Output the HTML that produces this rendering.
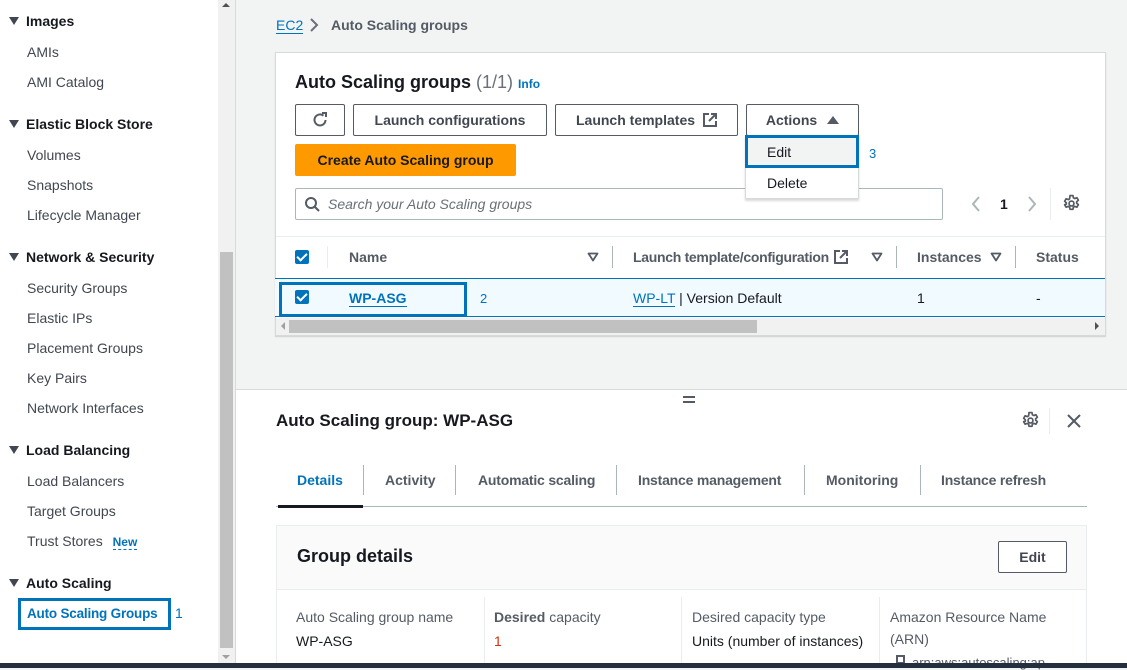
<!DOCTYPE html>
<html><head><meta charset="utf-8"><style>
*{margin:0;padding:0;box-sizing:border-box}
body{width:1127px;height:668px;overflow:hidden;position:relative;background:#f2f3f3;font-family:"Liberation Sans",sans-serif;font-size:14px;color:#16191f}
.a{position:absolute;white-space:nowrap}
.sb{left:0;top:0;width:218px;height:668px;background:#fff}
.h{font-weight:bold;color:#16191f;left:9px}
.h:before{content:"";display:inline-block;width:0;height:0;border-left:5px solid transparent;border-right:5px solid transparent;border-top:8px solid #414750;margin-right:7px;vertical-align:1px}
.l{left:27px;color:#414750}
.btn{position:absolute;border:1px solid #545b64;border-radius:2px;background:#fff;font-weight:bold;color:#414750;display:flex;align-items:center;justify-content:center;height:32px;top:104px}
.blue{color:#0073bb}
.cb{position:absolute;width:14px;height:14px;background:#0073bb;border-radius:2px}
.cb:after{content:"";position:absolute;left:4px;top:1px;width:4px;height:8px;border:solid #fff;border-width:0 2px 2px 0;transform:rotate(45deg)}
.th{top:249px;font-weight:bold;color:#545b64}
.sep{position:absolute;width:1px;background:#aab7b8}
.tab{top:472px;font-weight:bold;color:#545b64}
.sort{position:absolute}
</style></head><body>
<svg width="0" height="0" style="position:absolute"><defs>
<symbol id="gear" viewBox="0 0 18 18"><path d="M7.6 1.5h2.8l.4 2.1 1.3.7 2-.8 1.4 2.4-1.6 1.4v1.4l1.6 1.4-1.4 2.4-2-.8-1.3.7-.4 2.1H7.6l-.4-2.1-1.3-.7-2 .8-1.4-2.4L4.1 9.7V8.3L2.5 6.9l1.4-2.4 2 .8 1.3-.7z" stroke="#545b64" stroke-width="1.6" fill="none" stroke-linejoin="round"/><circle cx="9" cy="9" r="2.3" stroke="#545b64" stroke-width="1.6" fill="none"/></symbol>
<symbol id="tri" viewBox="0 0 12 10"><path d="M1.5 1.5h9L6 8.5z" stroke="#545b64" stroke-width="1.8" fill="none" stroke-linejoin="round"/></symbol>
</defs></svg>
<div class="a sb"></div>
<div class="a" style="left:218px;top:0;width:17px;height:668px;background:#f1f1f1"></div>
<div class="a" style="left:220px;top:252px;width:13px;height:396px;background:#c1c1c1"></div>
<div class="a" style="left:222px;top:3px;border-left:4px solid transparent;border-right:4px solid transparent;border-bottom:4px solid #505050"></div>
<div class="a" style="left:222px;top:655px;border-left:4px solid transparent;border-right:4px solid transparent;border-top:4px solid #a0a0a0"></div>
<div class="a" style="left:235px;top:0;width:1px;height:668px;background:#d5dbdb"></div>

<div class="a h" style="top:13px">Images</div>
<div class="a l" style="top:44px">AMIs</div>
<div class="a l" style="top:74px">AMI Catalog</div>
<div class="a h" style="top:116px">Elastic Block Store</div>
<div class="a l" style="top:147px">Volumes</div>
<div class="a l" style="top:177px">Snapshots</div>
<div class="a l" style="top:207px">Lifecycle Manager</div>
<div class="a h" style="top:249px">Network &amp; Security</div>
<div class="a l" style="top:280px">Security Groups</div>
<div class="a l" style="top:310px">Elastic IPs</div>
<div class="a l" style="top:340px">Placement Groups</div>
<div class="a l" style="top:370px">Key Pairs</div>
<div class="a l" style="top:400px">Network Interfaces</div>
<div class="a h" style="top:442px">Load Balancing</div>
<div class="a l" style="top:473px">Load Balancers</div>
<div class="a l" style="top:503px">Target Groups</div>
<div class="a l" style="top:533px">Trust Stores <span style="font-size:12px;font-weight:bold;color:#0073bb;border-bottom:1px dashed #0073bb;margin-left:6px">New</span></div>
<div class="a h" style="top:575px">Auto Scaling</div>
<div class="a" style="left:18px;top:598px;width:153px;height:32px;border:3px solid #0073bb"></div>
<div class="a" style="left:27px;top:606px;font-weight:bold;color:#0073bb;font-size:13.5px;letter-spacing:-0.2px">Auto Scaling Groups</div>
<div class="a blue" style="left:175px;top:605px">1</div>

<div class="a" style="left:276px;top:17px;color:#0073bb;border-bottom:1px solid #0073bb;line-height:16px">EC2</div>
<svg class="a" style="left:309px;top:17px" width="10" height="16"><path d="M2 2l6 6-6 6" stroke="#687078" stroke-width="2" fill="none"/></svg>
<div class="a" style="left:331px;top:17px;font-weight:bold;color:#545b64">Auto Scaling groups</div>

<div class="a" style="left:275px;top:52px;width:831px;height:284px;background:#fff;border:1px solid #d5dbdb;box-shadow:0 1px 1px rgba(0,0,0,.15)"></div>
<div class="a" style="left:295px;top:72px;font-size:18px;font-weight:bold">Auto Scaling groups <span style="font-weight:normal;color:#687078">(1/1)</span> <span style="font-size:12px;color:#0073bb">Info</span></div>
<div class="btn" style="left:295px;width:50px"><svg width="18" height="18" viewBox="0 0 18 18"><path d="M14.5 9a5.5 5.5 0 1 1-2-4.3" stroke="#545b64" stroke-width="2" fill="none"/><path d="M11 2h4v4" stroke="#545b64" stroke-width="2" fill="none"/></svg></div>
<div class="btn" style="left:353px;width:194px">Launch configurations</div>
<div class="btn" style="left:555px;width:183px">Launch templates <svg style="margin-left:8px" width="14" height="14"><path d="M6 1H1v12h12V8M8 1h5v5M13 1L6 8" stroke="#545b64" stroke-width="2" fill="none"/></svg></div>
<div class="btn" style="left:746px;width:113px">Actions <span style="margin-left:10px;width:0;height:0;border-left:6px solid transparent;border-right:6px solid transparent;border-bottom:8px solid #545b64"></span></div>
<div class="a" style="left:295px;top:144px;width:221px;height:32px;background:#ff9900;border-radius:2px;font-weight:bold;color:#16191f;display:flex;align-items:center;justify-content:center">Create Auto Scaling group</div>
<div class="a" style="left:295px;top:188px;width:648px;height:32px;border:1px solid #aab7b8;border-radius:2px;background:#fff"></div>
<svg class="a" style="left:304px;top:196px" width="16" height="16"><circle cx="7" cy="7" r="5" stroke="#545b64" stroke-width="2" fill="none"/><path d="M11 11l4 4" stroke="#545b64" stroke-width="2"/></svg>
<div class="a" style="left:328px;top:196px;font-style:italic;color:#687078">Search your Auto Scaling groups</div>
<div class="a" style="left:745px;top:135px;width:114px;height:64px;background:#fff;border:1px solid #d5dbdb;box-shadow:0 2px 2px rgba(0,0,0,.15)"></div>
<div class="a" style="left:745px;top:135px;width:114px;height:33px;background:#f2f3f3;border:3px solid #0073bb"></div>
<div class="a" style="left:767px;top:144px;color:#16191f">Edit</div>
<div class="a" style="left:767px;top:175px;color:#16191f">Delete</div>
<div class="a blue" style="left:869px;top:146px;font-size:13px">3</div>
<svg class="a" style="left:970px;top:195px" width="12" height="18"><path d="M9 2L3 9l6 7" stroke="#aab7b8" stroke-width="2" fill="none"/></svg>
<div class="a" style="left:1000px;top:196px;font-weight:bold">1</div>
<svg class="a" style="left:1026px;top:195px" width="12" height="18"><path d="M3 2l6 7-6 7" stroke="#aab7b8" stroke-width="2" fill="none"/></svg>
<div class="a" style="left:1050px;top:188px;width:1px;height:32px;background:#eaeded"></div>
<svg class="a" style="left:1062px;top:194px" width="19" height="19"><use href="#gear"/></svg>

<div class="a" style="left:276px;top:236px;width:829px;height:1px;background:#eaeded"></div>
<div class="cb" style="left:295px;top:250px"></div>
<div class="sep" style="left:327px;top:246px;height:22px;background:#eaeded"></div>
<div class="a th" style="left:349px">Name</div>
<svg class="sort" style="left:587px;top:252px" width="12" height="10"><use href="#tri"/></svg>
<div class="sep" style="left:612px;top:246px;height:22px"></div>
<div class="a th" style="left:633px;letter-spacing:-0.3px">Launch template/configuration <svg width="14" height="14" style="vertical-align:-2px;margin-left:2px"><path d="M6 1H1v12h12V8M8 1h5v5M13 1L6 8" stroke="#545b64" stroke-width="2" fill="none"/></svg></div>
<svg class="sort" style="left:871px;top:252px" width="12" height="10"><use href="#tri"/></svg>
<div class="sep" style="left:896px;top:246px;height:22px"></div>
<div class="a th" style="left:917px">Instances</div>
<svg class="sort" style="left:990px;top:252px" width="12" height="10"><use href="#tri"/></svg>
<div class="sep" style="left:1015px;top:246px;height:22px"></div>
<div class="a th" style="left:1036px">Status</div>

<div class="a" style="left:275px;top:278px;width:830px;height:39px;background:#f1faff;border-top:1px solid #0073bb;border-bottom:1px solid #0073bb"></div>
<div class="a" style="left:279px;top:282px;width:188px;height:35px;border:3px solid #0073bb"></div>
<div class="cb" style="left:295px;top:290px"></div>
<div class="a" style="left:349px;top:290px;font-weight:bold;color:#0073bb;border-bottom:1px solid #0073bb;line-height:16px">WP-ASG</div>
<div class="a blue" style="left:480px;top:291px;font-size:13px">2</div>
<div class="a" style="left:633px;top:290px"><span style="color:#0073bb;border-bottom:1px solid #0073bb">WP-LT</span> | Version Default</div>
<div class="a" style="left:917px;top:290px">1</div>
<div class="a" style="left:1036px;top:290px">-</div>
<div class="a" style="left:276px;top:318px;width:829px;height:17px;background:#f1f1f1"></div>
<div class="a" style="left:289px;top:320px;width:468px;height:13px;background:#c1c1c1"></div>
<div class="a" style="left:281px;top:322px;border-top:4px solid transparent;border-bottom:4px solid transparent;border-right:4px solid #a0a0a0"></div>
<div class="a" style="left:1095px;top:322px;border-top:4px solid transparent;border-bottom:4px solid transparent;border-left:4px solid #505050"></div>

<div class="a" style="left:236px;top:389px;width:891px;height:279px;background:#fff;border-top:1px solid #d5dbdb"></div>
<div class="a" style="left:683px;top:396px;width:12px;height:2px;background:#545b64"></div>
<div class="a" style="left:683px;top:401px;width:12px;height:2px;background:#545b64"></div>
<div class="a" style="left:276px;top:411px;font-size:17px;font-weight:bold">Auto Scaling group: WP-ASG</div>
<svg class="a" style="left:1021px;top:411px" width="19" height="19"><use href="#gear"/></svg>
<div class="a" style="left:1049px;top:408px;width:1px;height:26px;background:#eaeded"></div>
<svg class="a" style="left:1066px;top:413px" width="16" height="16"><path d="M2 2l12 12M14 2L2 14" stroke="#545b64" stroke-width="2"/></svg>

<div class="a tab" style="left:297px;color:#0073bb">Details</div>
<div class="sep" style="left:363px;top:465px;height:30px"></div>
<div class="a tab" style="left:385px">Activity</div>
<div class="sep" style="left:455px;top:465px;height:30px"></div>
<div class="a tab" style="left:478px;letter-spacing:-0.2px">Automatic scaling</div>
<div class="sep" style="left:616px;top:465px;height:30px"></div>
<div class="a tab" style="left:638px;letter-spacing:-0.2px">Instance management</div>
<div class="sep" style="left:804px;top:465px;height:30px"></div>
<div class="a tab" style="left:826px">Monitoring</div>
<div class="sep" style="left:920px;top:465px;height:30px"></div>
<div class="a tab" style="left:941px;letter-spacing:-0.2px">Instance refresh</div>
<div class="a" style="left:276px;top:506px;width:811px;height:1px;background:#aab7b8"></div>
<div class="a" style="left:278px;top:505px;width:85px;height:3px;background:#16191f"></div>

<div class="a" style="left:276px;top:525px;width:811px;height:143px;border:1px solid #eaeded;background:#fff"></div>
<div class="a" style="left:277px;top:526px;width:809px;height:64px;background:#fafafa;border-bottom:1px solid #eaeded"></div>
<div class="a" style="left:297px;top:546px;font-size:18px;font-weight:bold">Group details</div>
<div class="a" style="left:998px;top:541px;width:69px;height:32px;border:1px solid #545b64;border-radius:2px;background:#fff;font-weight:bold;color:#414750;display:flex;align-items:center;justify-content:center">Edit</div>
<div class="a" style="left:296px;top:609px;color:#545b64">Auto Scaling group name</div>
<div class="a" style="left:296px;top:633px">WP-ASG</div>
<div class="sep" style="left:484px;top:597px;height:71px;background:#eaeded"></div>
<div class="a" style="left:494px;top:609px;color:#545b64"><b>Desired</b> capacity</div>
<div class="a" style="left:494px;top:633px;color:#d13212">1</div>
<div class="sep" style="left:681px;top:597px;height:71px;background:#eaeded"></div>
<div class="a" style="left:692px;top:609px;color:#545b64">Desired capacity type</div>
<div class="a" style="left:692px;top:633px">Units (number of instances)</div>
<div class="sep" style="left:879px;top:597px;height:71px;background:#eaeded"></div>
<div class="a" style="left:890px;top:609px;color:#545b64">Amazon Resource Name</div>
<div class="a" style="left:890px;top:631px;color:#545b64">(ARN)</div>
<div class="a" style="left:896px;top:655px;width:9px;height:9px;border:2px solid #545b64"></div>
<div class="a" style="left:912px;top:655px;color:#545b64;font-size:13px">arn:aws:autoscaling:ap-</div>
<div class="a" style="left:0;top:663px;width:1127px;height:5px;background:#232f3e"></div>
</body></html>
